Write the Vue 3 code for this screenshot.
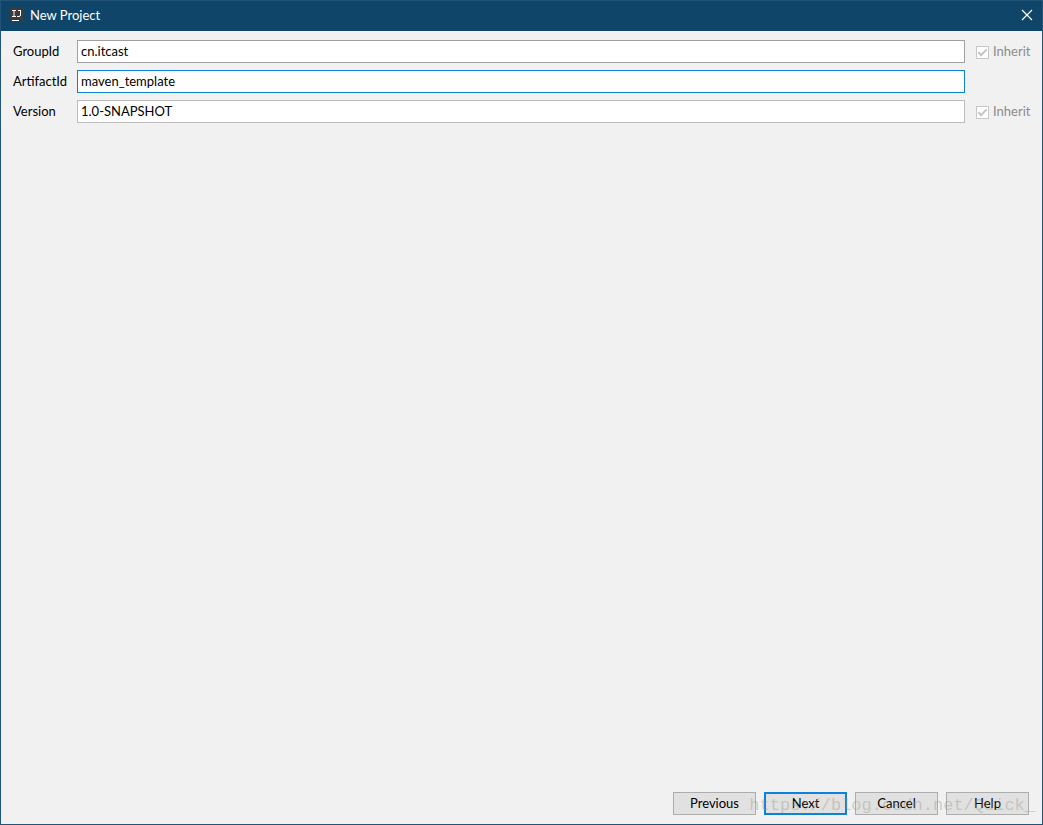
<script setup>
import { ref } from 'vue'

const fields = ref([
  { id: 'group-id', label: 'GroupId', value: 'cn.itcast', inherit: true, state: 'normal' },
  { id: 'artifact-id', label: 'ArtifactId', value: 'maven_template', inherit: false, state: 'active' },
  { id: 'version', label: 'Version', value: '1.0-SNAPSHOT', inherit: true, state: 'muted' },
])
const actions = ['Previous', 'Next', 'Cancel', 'Help']
</script>

<template>
  <div class="dialog">
    <header class="titlebar">
      <svg class="logo" viewBox="0 0 14 14" aria-hidden="true">
        <rect width="14" height="14" fill="#3b3a3c" />
        <path
          d="M2 2.5h4M4 2v6M2 8.5h4M8 2.5h3M10.5 2v5q0 1.5-1.5 1.5H7"
          fill="none"
          stroke="#fff"
        />
        <path d="M2 12.5h7" stroke="#fff" />
      </svg>
      <h1 class="title">New Project</h1>
      <button class="close" type="button" aria-label="Close">
        <svg viewBox="0 0 12 12" aria-hidden="true">
          <path d="M1 1l10 10M11 1L1 11" fill="none" stroke="#fff" stroke-width="1.2" />
        </svg>
      </button>
    </header>

    <main class="form">
      <div v-for="field in fields" :key="field.id" class="row">
        <label class="name" :for="field.id">{{ field.label }}</label>
        <input :id="field.id" v-model="field.value" class="text" :class="field.state" type="text" />
        <label v-if="field.inherit" class="inherit">
          <input class="check" type="checkbox" checked disabled />
          <span>Inherit</span>
        </label>
      </div>
    </main>

    <footer class="footer">
      <button
        v-for="action in actions"
        :key="action"
        type="button"
        class="action"
        :class="{ primary: action === 'Next' }"
      >
        {{ action }}
      </button>
      <span class="watermark">https://blog.csdn.net/Quick_</span>
    </footer>
  </div>
</template>

<style>
body {
  margin: 0;
  background: #f1f1f1;
}
</style>

<style scoped>
.dialog {
  box-sizing: border-box;
  display: flex;
  flex-direction: column;
  min-height: 100vh;
  border: 1px solid #22547a;
  background: #f1f1f1;
  color: #000;
  font-family: Lato, "Open Sans", sans-serif;
  font-size: 13px;
  line-height: 20px;
}

.titlebar {
  display: flex;
  align-items: center;
  height: 30px;
  padding: 0 9px;
  background: #0f4569;
  color: #fff;
}

.logo {
  width: 14px;
  height: 14px;
  padding-bottom: 2px;
}

.title {
  flex: 1;
  margin: 0 0 0 6px;
  padding-bottom: 2px;
  font-size: 13px;
  font-weight: 400;
}

.close {
  display: flex;
  padding: 0 0 2px;
  border: 0;
  background: none;
}

.close svg {
  width: 12px;
  height: 12px;
}

.form {
  display: flex;
  flex: 1;
  flex-direction: column;
  gap: 7px;
  padding: 9px 12px;
}

.row {
  display: grid;
  grid-template-columns: 64px 1fr 65px;
  align-items: center;
  height: 23px;
}

.name,
.inherit span {
  padding-bottom: 1px;
}

.text {
  box-sizing: border-box;
  width: 100%;
  height: 23px;
  padding: 0 3px 1px;
  border: 1px solid #a0a0a0;
  border-radius: 0;
  outline: 0;
  background: #fff;
  color: #000;
  font: inherit;
}

.text.active {
  border-color: #0c82dc;
}

.text.muted {
  border-color: #bcbcbc;
}

.inherit {
  display: flex;
  align-items: center;
  gap: 4px;
  padding-left: 11px;
  color: #8c8c8c;
}

.check {
  box-sizing: border-box;
  flex: none;
  appearance: none;
  width: 13px;
  height: 13px;
  margin: 1px 0 0;
  border: 1px solid #c8c8c8;
  background: #fff;
}

.check:checked::before {
  content: "";
  display: block;
  box-sizing: border-box;
  width: 9px;
  height: 5px;
  margin: 2px 1px;
  border: solid #c4c4c4;
  border-width: 0 0 2px 2px;
  transform: rotate(-45deg);
}

.footer {
  position: relative;
  display: flex;
  justify-content: flex-end;
  gap: 8px;
  padding: 0 13px 9px;
}

.action {
  box-sizing: border-box;
  width: 83px;
  height: 23px;
  padding: 0;
  border: 1px solid #adadad;
  background: #e1e1e1;
  color: #000;
  font: inherit;
  line-height: 19px;
}

.action.primary {
  border: 2px solid #0c82dc;
}

.watermark {
  position: absolute;
  right: 7px;
  bottom: 8px;
  color: rgba(150, 150, 130, 0.4);
  font-family: "Liberation Mono", monospace;
  font-size: 17px;
  pointer-events: none;
}
</style>
